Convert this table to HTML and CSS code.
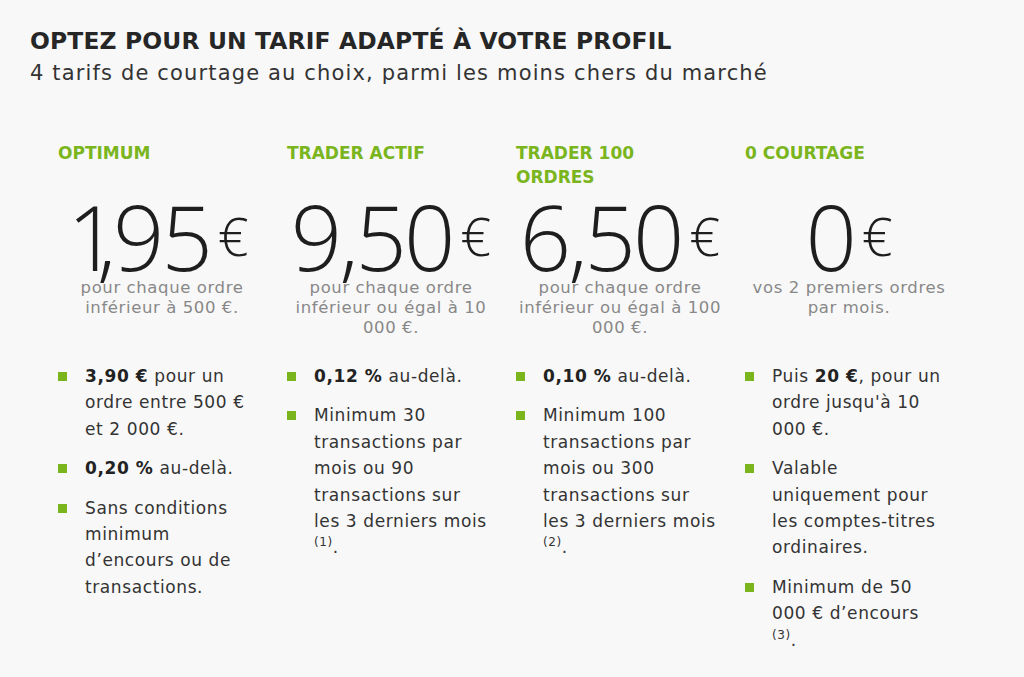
FILE: index.html
```html
<!DOCTYPE html>
<html lang="fr">
<head>
<meta charset="utf-8">
<link rel="stylesheet" href="styles.css">
</head>
<body>
<div class="page">
  <h1 class="title">OPTEZ POUR UN TARIF ADAPTÉ À VOTRE PROFIL</h1>
  <p class="subtitle">4 tarifs de courtage au choix, parmi les moins chers du marché</p>
  <div class="cols">
    <div class="col">
      <h2 class="name">OPTIMUM</h2>
      <div class="price"><span class="num"><span class="one">1</span>,95</span><span class="cur">€</span></div>
      <p class="desc">pour chaque ordre inférieur à 500 €.</p>
      <ul class="list">
        <li><b>3,90 €</b> pour un ordre entre 500 € et 2 000 €.</li>
        <li><b>0,20 %</b> au-delà.</li>
        <li>Sans conditions minimum d’encours ou de transactions.</li>
      </ul>
    </div>
    <div class="col">
      <h2 class="name">TRADER ACTIF</h2>
      <div class="price"><span class="num">9,50</span><span class="cur">€</span></div>
      <p class="desc">pour chaque ordre inférieur ou égal à 10 000 €.</p>
      <ul class="list">
        <li><b>0,12 %</b> au-delà.</li>
        <li>Minimum 30 transactions par mois ou 90 transactions sur les 3 derniers mois <sup>(1)</sup>.</li>
      </ul>
    </div>
    <div class="col">
      <h2 class="name">TRADER 100 ORDRES</h2>
      <div class="price"><span class="num">6,50</span><span class="cur">€</span></div>
      <p class="desc">pour chaque ordre inférieur ou égal à 100 000 €.</p>
      <ul class="list">
        <li><b>0,10 %</b> au-delà.</li>
        <li>Minimum 100 transactions par mois ou 300 transactions sur les 3 derniers mois <sup>(2)</sup>.</li>
      </ul>
    </div>
    <div class="col">
      <h2 class="name">0 COURTAGE</h2>
      <div class="price"><span class="num">0</span><span class="cur">€</span></div>
      <p class="desc">vos 2 premiers ordres par mois.</p>
      <ul class="list">
        <li>Puis <b>20 €</b>, pour un ordre jusqu'à 10 000 €.</li>
        <li>Valable uniquement pour les comptes-titres ordinaires.</li>
        <li>Minimum de 50 000 € d’encours <sup>(3)</sup>.</li>
      </ul>
    </div>
  </div>
</div>
</body>
</html>
```

FILE: styles.css
```css
html, body {
  margin: 0;
  padding: 0;
  background: #f8f8f8;
}
body {
  font-family: "DejaVu Sans", "Noto Sans", sans-serif;
  color: #2b2b2b;
}
.page {
  padding: 26px 30px 0 30px;
}
.title {
  margin: 0;
  font-size: 23.4px;
  line-height: 30px;
  font-weight: 600;
  letter-spacing: 0.15px;
  color: #262626;
}
.subtitle {
  margin: 3px 0 0 0;
  font-size: 21px;
  line-height: 28px;
  letter-spacing: 1.15px;
  color: #333;
}
.cols {
  display: grid;
  grid-template-columns: repeat(4, 208px);
  column-gap: 21px;
  margin: 54px 0 0 28px;
}
.name {
  margin: 0;
  max-width: 180px;
  height: 48px;
  font-size: 17px;
  line-height: 24px;
  font-weight: 600;
  color: #7ab51d;
}
.price {
  text-align: center;
  font-family: "Open Sans", sans-serif;
  font-weight: 300;
  color: #1e1e1e;
  height: 90px;
  line-height: 90px;
  margin-top: 1px;
}
.num {
  font-size: 90px;
  letter-spacing: -3px;
}
.one {
  margin-left: -8px;
  letter-spacing: -22px;
}
.cur {
  font-size: 54px;
  vertical-align: 15px;
  margin-left: 8px;
}
.desc {
  margin: -2px 0 0 0;
  text-align: center;
  color: #888;
  font-size: 16.5px;
  line-height: 20px;
  letter-spacing: 0.6px;
  height: 62px;
}
.list {
  list-style: none;
  margin: 23px 0 0 0;
  padding: 0;
}
.list li {
  position: relative;
  padding: 0 7px 0 27px;
  font-size: 17px;
  line-height: 26.4px;
  letter-spacing: 0.6px;
  color: #333;
  margin-bottom: 13px;
}
.list li::before {
  content: "";
  position: absolute;
  left: 0;
  top: 9px;
  width: 9px;
  height: 9px;
  background: #7ab51d;
}
.list b {
  font-weight: 700;
  color: #222;
}
.list sup {
  font-size: 12px;
  line-height: 0;
}
```
